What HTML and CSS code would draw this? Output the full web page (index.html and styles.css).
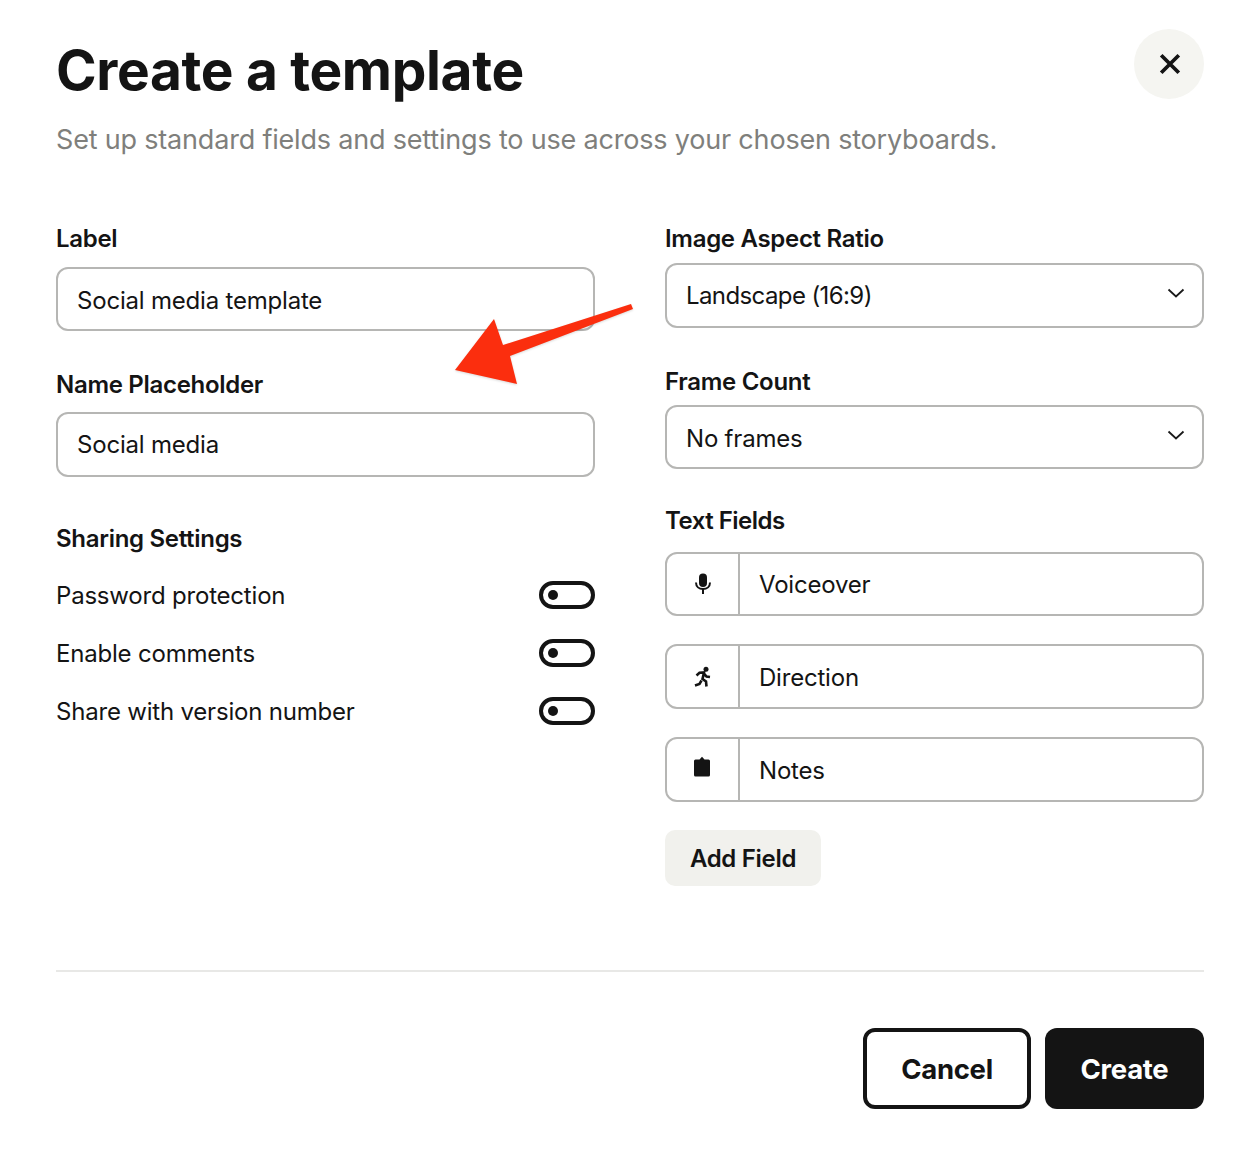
FILE: index.html
```html
<!DOCTYPE html>
<html lang="en">
<head>
<meta charset="utf-8">
<title>Create a template</title>
<link rel="stylesheet" href="styles.css">
</head>
<body>
<main class="modal">
  <header class="head">
    <div>
      <h1 class="title">Create a template</h1>
      <p class="subtitle">Set up standard fields and settings to use across your chosen storyboards.</p>
    </div>
    <button class="close" aria-label="Close">
      <svg width="22" height="22" viewBox="0 0 20 20"><path d="M2 2 18 18M18 2 2 18" stroke="#141414" stroke-width="3.400" fill="none"/></svg>
    </button>
  </header>

  <div class="columns">
    <section class="col-left">
      <h2 class="label label-first">Label</h2>
      <div class="box box-text">Social media template</div>
      <h2 class="label label-name">Name Placeholder</h2>
      <div class="box box-text box-tall">Social media</div>
      <h2 class="label label-share">Sharing Settings</h2>
      <div class="toggles">
        <div class="toggle-row"><span>Password protection</span><span class="toggle"></span></div>
        <div class="toggle-row"><span>Enable comments</span><span class="toggle"></span></div>
        <div class="toggle-row"><span>Share with version number</span><span class="toggle"></span></div>
      </div>
    </section>

    <section class="col-right">
      <h2 class="label label-ratio">Image Aspect Ratio</h2>
      <div class="box box-select"><span class="tight">Landscape (16:9)</span>
        <svg class="chev" width="18" height="10" viewBox="0 0 18 10"><path d="M1.500 1.500 9 8.500 16.500 1.500" stroke="#1a1a1a" stroke-width="1.800" fill="none"/></svg>
      </div>
      <h2 class="label label-frame">Frame Count</h2>
      <div class="box box-select box-frame"><span>No frames</span>
        <svg class="chev" width="18" height="10" viewBox="0 0 18 10"><path d="M1.500 1.500 9 8.500 16.500 1.500" stroke="#1a1a1a" stroke-width="1.800" fill="none"/></svg>
      </div>
      <h2 class="label label-fields">Text Fields</h2>
      <div class="fields">
        <div class="field field-short">
          <span class="field-icon">
            <svg width="18" height="22" viewBox="0 0 18 22"><rect x="5" y="0.500" width="8" height="13.500" rx="4" fill="#141414"/><path d="M2 9.500C2 13.500 5 16 9 16S16 13.500 16 9.500" stroke="#141414" stroke-width="2" fill="none"/><path d="M9 15.500V21" stroke="#141414" stroke-width="2"/></svg>
          </span>
          <span class="field-name">Voiceover</span>
        </div>
        <div class="field">
          <span class="field-icon">
            <svg width="20" height="22" viewBox="0 0 20 22"><circle cx="13" cy="3.200" r="2.500" fill="#141414"/><path d="M3.500 9.500 6.500 6.800 11 6.500 9.500 13 13 15.500 13.500 20.500M11 7.500 13.500 10.500 17 11M8.500 14.500 6.500 18 2 19.500" stroke="#141414" stroke-width="2.600" fill="none"/></svg>
          </span>
          <span class="field-name">Direction</span>
        </div>
        <div class="field">
          <span class="field-icon icon-notes">
            <svg width="18" height="22" viewBox="0 0 18 22"><path d="M2.500 3.500H6.500L9 .8 11.500 3.500H15.500A1.500 1.500 0 0 1 17 5V19A1.500 1.500 0 0 1 15.500 20.500H2.500A1.500 1.500 0 0 1 1 19V5A1.500 1.500 0 0 1 2.500 3.500Z" fill="#141414"/></svg>
          </span>
          <span class="field-name">Notes</span>
        </div>
      </div>
      <button class="add">Add Field</button>
    </section>
  </div>

  <hr class="divider">

  <footer class="actions">
    <button class="btn btn-outline">Cancel</button>
    <button class="btn btn-solid">Create</button>
  </footer>
</main>

<svg class="arrow" width="180" height="90" viewBox="0 0 180 90"><path d="M176 4 178 9 55 56 62 84 0 70 39 19 48 45Z" fill="#fb2e0e"/></svg>
</body>
</html>
```

FILE: styles.css
```css
* { box-sizing: border-box; }
html, body { margin: 0; padding: 0; background: #fff; }
body {
  width: 1260px;
  height: 1152px;
  position: relative;
  overflow: hidden;
  font-family: Inter, "Liberation Sans", sans-serif;
  color: #141414;
}
.modal { padding: 28px 56px 0; }
.head { display: flex; justify-content: space-between; align-items: flex-start; height: 194px; }
.title {
  margin: 10px 0 0;
  font-size: 55px;
  line-height: 64px;
  font-weight: 700;
  letter-spacing: -0.35px;
}
.subtitle {
  margin: 20px 0 0;
  font-size: 27px;
  line-height: 36px;
  font-weight: 400;
  color: #7f7f7c;
  letter-spacing: -0.19px;
}
.close {
  width: 70px; height: 70px;
  margin-top: 1px;
  border: 0; border-radius: 50%;
  background: #f5f5f1;
  display: flex; align-items: center; justify-content: center;
  padding: 0 0 0 2px;
}
.columns { display: grid; grid-template-columns: 539px 539px; column-gap: 70px; height: 748px; }
.label {
  margin: 0;
  font-size: 24px;
  line-height: 32px;
  font-weight: 600;
  letter-spacing: -0.3px;
}
.box {
  border: 2px solid #b6b6b4;
  border-radius: 12px;
  height: 64px;
  padding: 2px 19px 0;
  font-size: 24px;
  letter-spacing: -0.2px;
  display: flex;
  align-items: center;
  justify-content: space-between;
}
.box-tall { height: 65px; padding-top: 0; }
.label-first { margin-top: 1px; margin-bottom: 12px; }
.label-name { margin-top: 38px; margin-bottom: 11px; }
.label-share { margin-top: 46px; }
.toggles { margin-top: 25px; display: flex; flex-direction: column; gap: 26px; }
.toggle-row {
  display: flex; align-items: center; justify-content: space-between;
  font-size: 24px; line-height: 32px; letter-spacing: -0.2px;
}
.toggle {
  width: 56px; height: 28px;
  margin-top: -2px;
  border: 4px solid #141414;
  border-radius: 14px;
  position: relative;
  display: block;
}
.toggle::after {
  content: "";
  position: absolute;
  left: 5px; top: 5px;
  width: 10px; height: 10px;
  border-radius: 50%;
  background: #141414;
}
.tight { letter-spacing: -0.6px; }
.label-ratio { margin-top: 1px; margin-bottom: 8px; }
.box-select { padding: 0 17px 0 19px; height: 65px; }
.box-frame { height: 64px; padding-top: 2px; }
.label-frame { margin-top: 38px; margin-bottom: 7px; }
.label-fields { margin-top: 36px; margin-bottom: 15px; letter-spacing: -0.5px; }
.chev { flex: none; margin-top: -6px; }
.fields { display: flex; flex-direction: column; gap: 28px; }
.field {
  height: 65px;
  border: 2px solid #b6b6b4;
  border-radius: 12px;
  display: flex;
  align-items: center;
  font-size: 24px;
  letter-spacing: -0.2px;
}
.field-short { height: 64px; }
.field-icon {
  width: 73px; height: 100%;
  border-right: 2px solid #b6b6b4;
  display: flex; align-items: center; justify-content: center;
  flex: none;
}
.icon-notes { padding: 0 2px 5px 0; }
.field-name { padding: 1px 0 0 19px; }
.add {
  margin-top: 28px;
  width: 156px; height: 56px;
  border: 0; border-radius: 10px;
  background: #f1f1ed;
  font: 600 24px Inter, "Liberation Sans", sans-serif;
  letter-spacing: -0.3px;
  color: #141414;
  display: block;
}
.divider { margin: 0; border: 0; height: 2px; background: #e8e8e6; }
.actions { display: flex; justify-content: flex-end; gap: 14px; margin-top: 56px; }
.btn {
  height: 81px;
  border-radius: 12px;
  padding-top: 2px;
  font: 700 27.500px Inter, "Liberation Sans", sans-serif;
  letter-spacing: -0.3px;
}
.btn-outline { width: 168px; background: #fff; border: 4px solid #141414; color: #141414; }
.btn-solid { width: 159px; background: #141414; border: 0; color: #fff; }
.arrow { position: absolute; left: 455px; top: 300px; filter: drop-shadow(0 1px 1px rgba(0,0,0,.15)); }
```
